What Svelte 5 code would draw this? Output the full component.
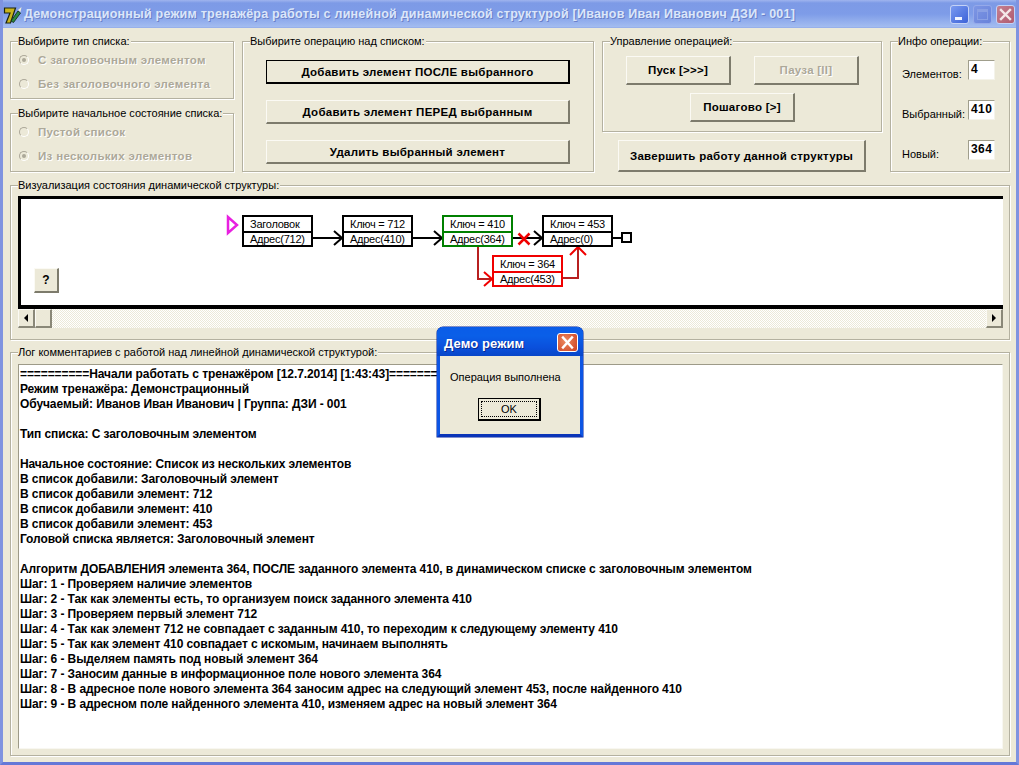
<script>
  const log = [
    '==========Начали работать с тренажёром [12.7.2014] [1:43:43]==========',
    'Режим тренажёра: Демонстрационный',
    'Обучаемый: Иванов Иван Иванович | Группа: ДЗИ - 001',
    '',
    'Тип списка: С заголовочным элементом',
    '',
    'Начальное состояние: Список из нескольких элементов',
    'В список добавили: Заголовочный элемент',
    'В список добавили элемент: 712',
    'В список добавили элемент: 410',
    'В список добавили элемент: 453',
    'Головой списка является: Заголовочный элемент',
    '',
    'Алгоритм ДОБАВЛЕНИЯ элемента 364, ПОСЛЕ заданного элемента 410, в динамическом списке с заголовочным элементом',
    'Шаг: 1 - Проверяем наличие элементов',
    'Шаг: 2 - Так как элементы есть, то организуем поиск заданного элемента 410',
    'Шаг: 3 - Проверяем первый элемент 712',
    'Шаг: 4 - Так как элемент 712 не совпадает с заданным 410, то переходим к следующему элементу 410',
    'Шаг: 5 - Так как элемент 410 совпадает с искомым, начинаем выполнять',
    'Шаг: 6 - Выделяем память под новый элемент 364',
    'Шаг: 7 - Заносим данные в информационное поле нового элемента 364',
    'Шаг: 8 - В адресное поле нового элемента 364 заносим адрес на следующий элемент 453, после найденного 410',
    'Шаг: 9 - В адресном поле найденного элемента 410, изменяем адрес на новый элемент 364'
  ];
  const nodes = [
    { x: 243, y: 216, w: 69, h: 30, d: 232, c: '#000', a: 'Заголовок', b: 'Адрес(712)' },
    { x: 343, y: 216, w: 69, h: 30, d: 232, c: '#000', a: 'Ключ = 712', b: 'Адрес(410)' },
    { x: 443, y: 216, w: 69, h: 30, d: 232, c: '#008000', a: 'Ключ = 410', b: 'Адрес(364)' },
    { x: 543, y: 216, w: 69, h: 30, d: 232, c: '#000', a: 'Ключ = 453', b: 'Адрес(0)' },
    { x: 493, y: 256, w: 69, h: 30, d: 272, c: '#f00000', a: 'Ключ = 364', b: 'Адрес(453)' }
  ];
</script>

<div class="window">
  <header class="titlebar">
    <svg class="appicon" width="20" height="20" viewBox="0 0 20 20">
      <path d="M1.5 3h11l-5 15H3l4-10H1.5z" fill="#c9b41c" stroke="#1c2410" stroke-width="1.2"/>
      <path d="M8 16l7-10 2.5 2-7 9.500z" fill="#2c8a40" stroke="#14301c" stroke-width=".9"/>
      <path d="M15 5l3.500-3-1 5z" fill="#eeeed8"/>
    </svg>
    <span class="wintitle">Демонстрационный режим тренажёра работы с линейной динамической структурой [Иванов Иван Иванович ДЗИ - 001]</span>
    <div class="controls">
      <span class="ctl min"><i></i></span>
      <span class="ctl max"><i></i></span>
      <span class="ctl close">
        <svg width="19" height="19" viewBox="0 0 19 19"><path d="M5 5l9 9M14 5l-9 9" stroke="#f4e8e8" stroke-width="2.4" stroke-linecap="square"/></svg>
      </span>
    </div>
  </header>

  <main class="content">
    <section class="top">
      <div class="col">
        <div class="group g1">
          <span class="legend">Выбирите тип списка:</span>
          <div class="radio on">С заголовочным элементом</div>
          <div class="radio">Без заголовочного элемента</div>
        </div>
        <div class="group g2">
          <span class="legend">Выбирите начальное состояние списка:</span>
          <div class="radio">Пустой список</div>
          <div class="radio on">Из нескольких элементов</div>
        </div>
      </div>

      <div class="group ops">
        <span class="legend">Выбирите операцию над списком:</span>
        <button class="btn default">Добавить элемент ПОСЛЕ выбранного</button>
        <button class="btn">Добавить элемент ПЕРЕД выбранным</button>
        <button class="btn">Удалить выбранный элемент</button>
      </div>

      <div class="col ctlcol">
        <div class="group run">
          <span class="legend">Управление операцией:</span>
          <div class="runrow">
            <button class="btn wide">Пуск [&gt;&gt;&gt;]</button>
            <button class="btn wide off">Пауза [II]</button>
          </div>
          <button class="btn wide step">Пошагово [&gt;]</button>
        </div>
        <button class="btn finish">Завершить работу данной структуры</button>
      </div>

      <div class="group info">
        <span class="legend">Инфо операции:</span>
        <span class="lab">Элементов:</span><span class="num">4</span>
        <span class="lab">Выбранный:</span><span class="num">410</span>
        <span class="lab">Новый:</span><span class="num">364</span>
      </div>
    </section>

    <section class="group vis">
      <span class="legend">Визуализация состояния динамической структуры:</span>
      <div class="canvas">
        <svg class="diagram" width="985" height="113" viewBox="18 196 985 113">
          <path d="M228 217v16l9-8z" fill="none" stroke="#e820e0" stroke-width="2.500"/>

          <g fill="none" stroke="#000" stroke-width="2">
            <path d="M312 238h30M334 231l8 7-8 7"/>
            <path d="M412 238h30M434 231l8 7-8 7"/>
            <path d="M512 238h30M534 231l8 7-8 7"/>
            <path d="M612 238h10"/>
            <rect x="622" y="233" width="9" height="9"/>
          </g>
          <path d="M518.500 233.500l11 11M529.500 233.500l-11 11" stroke="#f00000" stroke-width="2.500" fill="none"/>
          <g fill="none" stroke-width="2">
            <path d="M478 246v33h14M562 278h16v-30" stroke="#b82020"/>
            <path d="M484 272l8 7-8 7M570 255l8-8 8 8" stroke="#f00000"/>
          </g>

          {#each nodes as n}
            <rect x={n.x} y={n.y} width={n.w} height={n.h} fill="#fff" stroke={n.c} stroke-width="2"/>
            <path d="M{n.x} {n.d}h{n.w}" stroke={n.c} stroke-width="2"/>
            <text class="nodetext" x={n.x + 7} y={n.d - 4}>{n.a}</text>
            <text class="nodetext" x={n.x + 7} y={n.y + n.h - 3}>{n.b}</text>
          {/each}
        </svg>
        <button class="btn help">?</button>
      </div>
      <div class="hscroll">
        <span class="sbtn"><i class="tri left"></i></span>
        <span class="thumb"></span>
        <span class="track"></span>
        <span class="sbtn"><i class="tri right"></i></span>
      </div>
    </section>

    <section class="group logbox">
      <span class="legend">Лог комментариев с работой над линейной динамической структурой:</span>
      <div class="logtext">
        {#each log as line}
          <div class="line">{line}</div>
        {/each}
      </div>
    </section>
  </main>

  <div class="dialog">
    <div class="dlgtitle">
      <span class="dlgname">Демо режим</span>
      <span class="dlgclose">
        <svg width="21" height="19" viewBox="0 0 21 19"><path d="M6 4.500l9 10M15 4.500l-9 10" stroke="#fff" stroke-width="2.400" stroke-linecap="square"/></svg>
      </span>
    </div>
    <div class="dlgbody">
      <p>Операция выполнена</p>
      <button class="okbtn"><span>OK</span></button>
    </div>
  </div>
</div>

<style>
  :global(body) { margin: 0; }
  .window {
    position: relative;
    box-sizing: border-box;
    width: 1019px;
    height: 765px;
    overflow: hidden;
    background: #ece9d8;
    border-left: 3px solid #7f93e0;
    border-right: 3px solid #7f93e0;
    border-bottom: 3px solid #6478d8;
    font: 11px "Liberation Sans", sans-serif;
    color: #000;
    display: flex;
    flex-direction: column;
  }
  .titlebar {
    height: 28px;
    flex: none;
    margin: 0 -3px;
    padding: 0 4px 0 3px;
    box-sizing: border-box;
    display: flex;
    align-items: center;
    background: linear-gradient(#9fb4ee 0, #7d9ae6 3px, #7e9ce8 50%, #a3bcf0 96%, #8ea6e6 100%);
  }
  .appicon { flex: none; margin-top: 1px; }
  .wintitle {
    margin-left: 1px;
    font: bold 12.5px "Liberation Sans", sans-serif;
    letter-spacing: 0.23px;
    color: #dbe6fa;
    text-shadow: 1px 1px 0 #6a80c8;
    white-space: nowrap;
  }
  .controls { margin-left: auto; display: flex; gap: 4px; }
  .ctl {
    width: 19px;
    height: 19px;
    box-sizing: border-box;
    border: 1px solid #c4d2f6;
    border-radius: 3px;
    display: block;
    position: relative;
  }
  .ctl.min { background: linear-gradient(135deg, #7a9af0, #3c62d8); }
  .ctl.min i { position: absolute; left: 4px; bottom: 3px; width: 7px; height: 3px; background: #f2f5ff; }
  .ctl.max { background: linear-gradient(135deg, #7d96e4, #6882da); border-color: #95a9ea; }
  .ctl.max i { position: absolute; left: 3px; top: 3px; width: 11px; height: 11px; box-sizing: border-box; border: 1px solid #8aa0e4; border-top-width: 3px; }
  .ctl.close { background: linear-gradient(135deg, #c48090, #b05a70); }
  .ctl.close svg { position: absolute; left: -1px; top: -1px; }

  .content { flex: 1; padding: 13px 6px 0 7px; display: flex; flex-direction: column; }
  .top {
    display: grid;
    grid-template-columns: 224px 352px 280px 120px;
    gap: 8px;
    height: 131px;
    flex: none;
  }
  .col { display: flex; flex-direction: column; justify-content: space-between; }
  .group {
    position: relative;
    box-sizing: border-box;
    border: 1px solid #b4b1a0;
    box-shadow: 1px 1px 0 #fff, inset 1px 1px 0 #fff;
  }
  .legend {
    position: absolute;
    left: 7px;
    top: -7px;
    background: #ece9d8;
    line-height: 13px;
    white-space: nowrap;
    padding-right: 1px;
  }
  .g1 { height: 58px; padding-top: 10px; }
  .g2 { height: 59px; padding-top: 10px; }
  .radio {
    position: relative;
    height: 16px;
    line-height: 16px;
    margin-bottom: 8px;
    padding-left: 27px;
    font: bold 11.5px/16px "Liberation Sans", sans-serif;
    letter-spacing: 0.33px;
    color: #aca899;
    text-shadow: 1px 1px 0 #fff;
    white-space: nowrap;
  }
  .radio::before {
    content: "";
    position: absolute;
    left: 8px;
    top: 3px;
    width: 10px;
    height: 10px;
    box-sizing: border-box;
    border: 1px solid #aca899;
    border-right-color: #fff;
    border-bottom-color: #fff;
    border-radius: 50%;
  }
  .radio.on::after {
    content: "";
    position: absolute;
    left: 11px;
    top: 6px;
    width: 4px;
    height: 4px;
    border-radius: 50%;
    background: #aca899;
  }

  .btn {
    display: block;
    box-sizing: border-box;
    margin: 0;
    padding: 0;
    background: #ece9d8;
    border: 1px solid #fff;
    border-right: 2px solid #7d7b6c;
    border-bottom: 2px solid #7d7b6c;
    border-top-color: #fbfaf4;
    border-left-color: #fbfaf4;
    font: bold 11.5px "Liberation Sans", sans-serif;
    letter-spacing: 0.27px;
    color: #000;
  }
  .ops { display: flex; flex-direction: column; align-items: center; gap: 16px; padding-top: 18px; }
  .ops .btn { width: 304px; height: 24px; flex: none; }
  .ops .btn.default { border: 2px solid #000; border-top-width: 1px; border-left-width: 1px; outline: 0; }
  .run { height: 91px; padding: 14px 0 0 23px; }
  .runrow { display: flex; gap: 23px; }
  .wide { width: 105px; height: 29px; flex: none; }
  .off { color: #aca899; text-shadow: 1px 1px 0 #fff; }
  .step { margin: 8px 0 0 64px; }
  .finish { margin-left: 16px; width: 248px; height: 32px; flex: none; }
  .info {
    display: grid;
    grid-template-columns: 66px 27px;
    grid-auto-rows: 20px;
    row-gap: 20px;
    padding: 18px 0 0 11px;
  }
  .lab { align-self: end; line-height: 14px; margin-bottom: -1px; }
  .num {
    box-sizing: border-box;
    background: #fff;
    border: 1px solid #a09e8c;
    border-right-color: #f4f3ea;
    border-bottom-color: #f4f3ea;
    font: bold 12px "Liberation Sans", sans-serif;
    letter-spacing: 0.4px;
    line-height: 16px;
    padding-left: 2px;
  }

  .vis { height: 155px; flex: none; margin-top: 13px; padding: 10px 6px 0 7px; }
  .canvas {
    position: relative;
    box-sizing: border-box;
    height: 113px;
    background: #fff;
    border-top: 3px solid #000;
    border-left: 3px solid #000;
    border-bottom: 4px solid #000;
  }
  .diagram { position: absolute; left: -3px; top: -3px; display: block; }
  .nodetext { font: 11px "Liberation Sans", sans-serif; letter-spacing: -0.25px; fill: #000; }
  .btn.help { position: absolute; left: 13px; top: 69px; width: 25px; height: 25px; font-size: 12px; }
  .hscroll { display: flex; height: 19px; }
  .sbtn {
    flex: none;
    width: 17px;
    box-sizing: border-box;
    background: #ece9d8;
    border: 1px solid #fbfaf4;
    border-right: 2px solid #8a8878;
    border-bottom: 2px solid #8a8878;
    display: flex;
    align-items: center;
    justify-content: center;
  }
  .thumb {
    flex: none;
    width: 17px;
    box-sizing: border-box;
    background: #ece9d8;
    border: 1px solid #fbfaf4;
    border-right: 2px solid #8a8878;
    border-bottom: 2px solid #8a8878;
  }
  .track { flex: 1; background: repeating-conic-gradient(#ece9d8 0 25%, #fff 0 50%) 0 0 / 2px 2px; }
  .tri { display: block; width: 0; height: 0; border: 4px solid transparent; }
  .tri.left { border-right: 4px solid #000; border-left: 0; }
  .tri.right { border-left: 4px solid #000; border-right: 0; }

  .logbox { height: 404px; flex: none; margin-top: 12px; padding: 11px 6px 0 7px; }
  .logtext {
    box-sizing: border-box;
    height: 385px;
    background: #fff;
    border: 1px solid #9d9a88;
    border-right-color: #f8f7f1;
    border-bottom-color: #f8f7f1;
    padding: 2px 0 0 1px;
    font: bold 12px "Liberation Sans", sans-serif;
    letter-spacing: -0.09px;
    line-height: 15px;
    overflow: hidden;
  }
  .line { height: 15px; white-space: nowrap; }

  .dialog {
    position: absolute;
    left: 434px;
    top: 327px;
    width: 146px;
    height: 110px;
    box-sizing: border-box;
    background: #ece9d8;
    border: 3px solid #0d55e4;
    border-top: 0;
    border-bottom-color: #0a34b8;
    border-radius: 6px 6px 0 0;
    box-shadow: 0 0 0 .5px #08249c;
  }
  .dlgtitle {
    height: 29px;
    margin: 0 -3px;
    padding: 2px 5px 0 7px;
    box-sizing: border-box;
    display: flex;
    align-items: center;
    justify-content: space-between;
    border-radius: 6px 6px 0 0;
    background: linear-gradient(#0a5ce8 0, #0a5fe8 30%, #0a50dc 70%, #0846c8 100%);
    color: #fff;
  }
  .dlgname {
    font: bold 13px "Liberation Sans", sans-serif;
    letter-spacing: 0.1px;
    text-shadow: 1px 1px 0 #0a2a90;
    margin-top: 1px;
  }
  .dlgclose {
    display: block;
    width: 21px;
    height: 19px;
    border: 1px solid #fff;
    box-sizing: border-box;
    border-radius: 3px;
    background: radial-gradient(circle at 40% 40%, #ec8a60, #cc4020);
    position: relative;
  }
  .dlgclose svg { position: absolute; left: -1px; top: -1px; }
  .dlgbody p { margin: 0; padding: 15px 0 0 10px; line-height: 13px; font-size: 11px; }
  .okbtn {
    display: block;
    box-sizing: border-box;
    margin: 14px 0 0 38px;
    width: 63px;
    height: 23px;
    padding: 2px;
    background: #ece9d8;
    border: 1px solid #000;
    border-right-width: 2px;
    border-bottom-width: 2px;
    font: 11px "Liberation Sans", sans-serif;
    color: #000;
  }
  .okbtn span { display: block; height: 100%; box-sizing: border-box; border: 1px dotted #000; line-height: 15px; text-align: center; }
</style>
